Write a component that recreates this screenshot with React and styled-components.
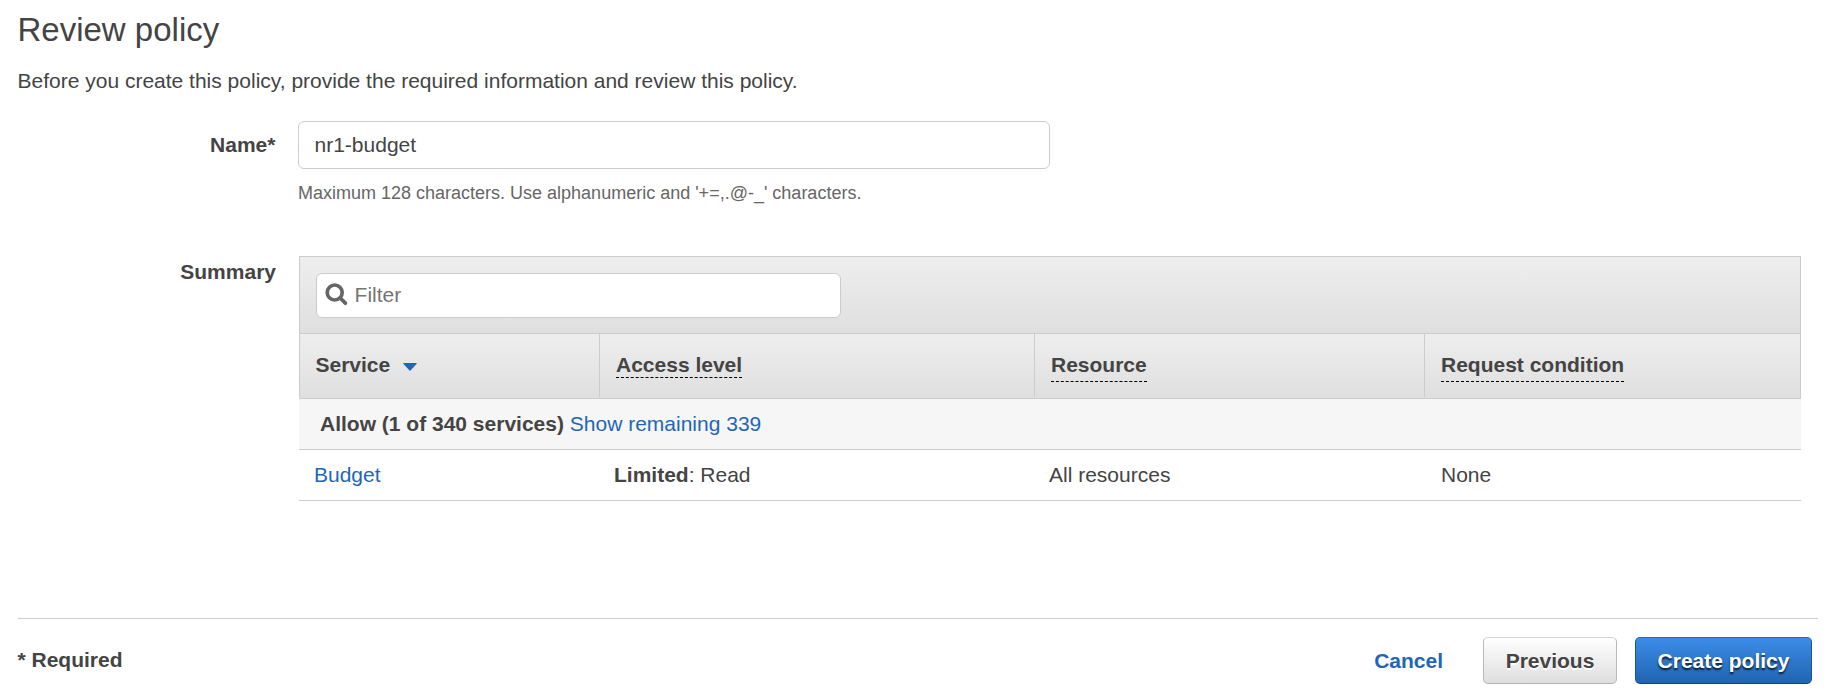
import React from "react";
import styled, { createGlobalStyle, css } from "styled-components";

const GlobalStyle = createGlobalStyle`
  * { box-sizing: border-box; }
  body {
    margin: 0;
    background: #fff;
    color: #444;
    font: 21px/24px "Liberation Sans", Arial, sans-serif;
  }
`;

const line = "#ccc";
const blue = "#1f66b8";

const Page = styled.main`
  display: flex;
  flex-direction: column;
  height: 698px;
  padding: 10px 13px 0 18px;
`;

const Title = styled.h1`
  margin: 0;
  font-size: 33px;
  line-height: 40px;
  font-weight: 400;
  text-indent: -0.5px;
`;

const Intro = styled.p`
  margin: 19px 0 28px;
  text-indent: -0.5px;
`;

const FormRow = styled.section`
  display: grid;
  grid-template-columns: 258px 1fr;
  column-gap: ${(p) => p.$gap};
`;

const Label = styled.label`
  padding-top: ${(p) => p.$top};
  padding-right: ${(p) => p.$right || 0};
  text-align: right;
  font-weight: 700;
`;

const NameInput = styled.input`
  display: block;
  width: 752px;
  height: 48px;
  padding: 0 15.5px;
  border: 1px solid ${line};
  border-radius: 6px;
  font: inherit;
  color: inherit;
  outline: none;
`;

const Hint = styled.p`
  margin: 13px 0 0;
  font-size: 18px;
  line-height: 22px;
  color: #666;
`;

const Summary = styled(FormRow)`
  margin-top: 52px;
`;

const TablePanel = styled.div`
  width: 1502px;
`;

const Toolbar = styled.div`
  height: 78px;
  padding: 16px;
  border: 1px solid ${line};
  background: linear-gradient(#eee, #dfdfdf);
`;

const FilterBox = styled.div`
  display: flex;
  align-items: center;
  width: 525px;
  height: 45px;
  padding-left: 8px;
  border: 1px solid ${line};
  border-radius: 6px;
  background: #fff;
`;

const SearchIcon = styled.svg`
  width: 24px;
  height: 24px;
  margin-bottom: 1px;
  flex: none;
`;

const FilterInput = styled.input`
  flex: 1;
  min-width: 0;
  height: 24px;
  padding: 0;
  margin: 0 0 1px 5.6px;
  border: 0;
  outline: none;
  font: inherit;
  background: transparent;
  &::placeholder { color: #757575; opacity: 1; }
`;

const columns = css`
  display: grid;
  grid-template-columns: 301px 435px 390px 376px;
`;

const HeaderRow = styled.div`
  ${columns}
  height: 65px;
  padding-bottom: 1px;
  border-bottom: 1px solid ${line};
  background: linear-gradient(#eee, #dfdfdf);
  box-shadow: inset -1px 0 ${line};
`;

const HeaderCell = styled.div`
  height: 63px;
  padding: 19px 0 0 ${(p) => (p.$first ? "15.5px" : "16px")};
  border-left: ${(p) => (p.$first ? `1px solid ${line}` : "0")};
  border-right: ${(p) => (p.$last ? "0" : `1px solid ${line}`)};
  font-weight: 700;
`;

const Term = styled.span`
  display: inline-block;
  height: ${(p) => (p.$deep ? "29px" : "25px")};
  border-bottom: 1px dashed #000;
`;

const SortArrow = styled.svg`
  width: 14px;
  height: 8px;
  margin: 0 0 1px 12.4px;
`;

const GroupRow = styled.div`
  height: 51px;
  padding: 13px 21px 0;
  border-bottom: 1px solid ${line};
  background: #f6f6f6;
`;

const DataRow = styled.div`
  ${columns}
  height: 51px;
  border-bottom: 1px solid ${line};
`;

const DataCell = styled.div`
  padding: 13px 0 0 ${(p) => p.$indent};
`;

const Link = styled.a`
  color: ${blue};
  font-weight: ${(p) => (p.$strong ? 700 : 400)};
`;

const Footer = styled.footer`
  display: flex;
  justify-content: space-between;
  margin-top: 117px;
  padding: 18px 6px 0 0;
  border-top: 1px solid ${line};
`;

const Required = styled.strong`
  padding-top: 11px;
  text-indent: -0.5px;
`;

const Actions = styled.div`
  display: flex;
  align-items: center;
`;

const Button = styled.button`
  width: ${(p) => (p.$primary ? "177px" : "134px")};
  height: 47px;
  margin-left: ${(p) => (p.$primary ? "18px" : "40px")};
  padding: 0;
  border: 1px solid;
  border-radius: 5px;
  font: inherit;
  font-weight: 700;
  ${(p) =>
    p.$primary
      ? css`
          color: #fff;
          border-color: #2368b0 #1c5594 #15406f;
          background: linear-gradient(#3c8de8, #2064b2);
          text-shadow: 0 2px 2px rgba(0, 0, 0, 0.8);
        `
      : css`
          color: #444;
          border-color: #d5d5d5 #b8b8b8 #b3b3b3;
          background: linear-gradient(#fff, #dedede);
          text-shadow: 0 2px 1px #fff;
        `}
`;

export default function App() {
  return (
    <Page>
      <GlobalStyle />
      <Title>Review policy</Title>
      <Intro>Before you create this policy, provide the required information and review this policy.</Intro>
      <FormRow $gap="22px">
        <Label $top="12px" $right="0.6px" htmlFor="policy-name">Name*</Label>
        <div>
          <NameInput id="policy-name" defaultValue="nr1-budget" />
          <Hint>Maximum 128 characters. Use alphanumeric and '+=,.@-_' characters.</Hint>
        </div>
      </FormRow>
      <Summary $gap="23px">
        <Label as="div" $top="4px">Summary</Label>
        <TablePanel>
          <Toolbar>
            <FilterBox>
              <SearchIcon viewBox="0 0 24 24" fill="none" stroke="#666">
                <circle cx="9.7" cy="9.5" r="7.5" strokeWidth="3.7" />
                <path d="M15.2 15 L20.4 20.2" strokeWidth="3.8" strokeLinecap="round" />
              </SearchIcon>
              <FilterInput placeholder="Filter" />
            </FilterBox>
          </Toolbar>
          <HeaderRow>
            <HeaderCell $first>
              Service
              <SortArrow viewBox="0 0 14 8">
                <path d="M0.6 0 H13.4 Q14 0.4 13.5 1 L7.5 7.6 Q7 8 6.5 7.6 L0.5 1 Q0 0.4 0.6 0Z" fill={blue} />
              </SortArrow>
            </HeaderCell>
            <HeaderCell><Term>Access level</Term></HeaderCell>
            <HeaderCell><Term $deep>Resource</Term></HeaderCell>
            <HeaderCell $last><Term $deep>Request condition</Term></HeaderCell>
          </HeaderRow>
          <GroupRow>
            <strong>Allow (1 of 340 services)</strong> <Link>Show remaining 339</Link>
          </GroupRow>
          <DataRow>
            <DataCell $indent="15px"><Link>Budget</Link></DataCell>
            <DataCell $indent="14px"><strong>Limited</strong>: Read</DataCell>
            <DataCell $indent="14px">All resources</DataCell>
            <DataCell $indent="16px">None</DataCell>
          </DataRow>
        </TablePanel>
      </Summary>
      <Footer>
        <Required>* Required</Required>
        <Actions>
          <Link $strong>Cancel</Link>
          <Button>Previous</Button>
          <Button $primary>Create policy</Button>
        </Actions>
      </Footer>
    </Page>
  );
}
